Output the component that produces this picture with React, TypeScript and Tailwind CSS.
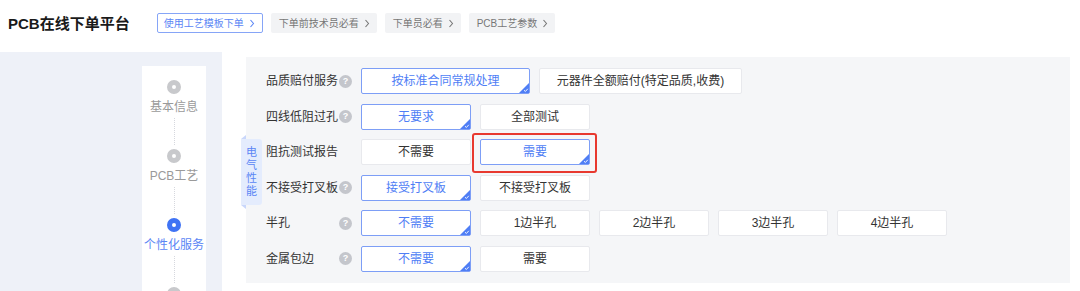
import { ReactNode } from "react";

const font = "font-['Liberation_Sans','Noto_Sans_CJK_SC',sans-serif]";

function Help() {
  return (
    <span className="flex h-[13px] w-[13px] items-center justify-center rounded-full bg-[#c4c6cc] text-[9px] font-bold leading-none text-white">
      ?
    </span>
  );
}

function Chev() {
  return (
    <svg width="6" height="9" viewBox="0 0 6 9" className="shrink-0">
      <path d="M1.5 1 L4.5 4.5 L1.5 8" stroke="currentColor" strokeWidth="1.1" fill="none" />
    </svg>
  );
}

function Opt({ label, on, w = "w-[110px]", hl }: { label: string; on?: boolean; w?: string; hl?: boolean }) {
  return (
    <div className={`relative ${w} h-[26px] shrink-0`}>
      <div
        className={`relative flex h-full w-full items-center justify-center rounded-[2px] bg-white text-[12px] ${
          on ? "border border-[#7d9ef6] text-[#4f7ef5]" : "border border-[#e8e9ed] text-[#333]"
        }`}
      >
        {label}
        {on && (
          <svg className="absolute bottom-0 right-0" width="10" height="10" viewBox="0 0 10 10">
            <path d="M10 0 L10 10 L0 10 Z" fill="#4f7ef5" />
            <path d="M5 7.2 L6.4 8.5 L8.8 5.8" stroke="#fff" strokeWidth="0.9" fill="none" />
          </svg>
        )}
      </div>
      {hl && <div className="absolute -bottom-[8px] -left-[8px] -right-[7px] -top-[6px] rounded-[3px] border-2 border-[#e8392f]" />}
    </div>
  );
}

function Row({ label, help = true, children }: { label: string; help?: boolean; children: ReactNode }) {
  return (
    <div className="flex h-[26px] items-center">
      <div className="flex w-[95px] shrink-0 items-center">
        <span className="w-[73px] text-[12px] text-[#333]">{label}</span>
        {help && <Help />}
      </div>
      <div className="flex gap-[9px]">{children}</div>
    </div>
  );
}

function Step({ label, active, last }: { label: string; active?: boolean; last?: boolean }) {
  return (
    <div className="flex flex-col items-center">
      <div className={`h-[14px] w-[14px] rounded-full border-[5px] bg-white ${active ? "border-[#3f73f4]" : "border-[#c8c9cc]"}`} />
      <div className={`mt-[6px] text-[12px] leading-[14px] ${active ? "text-[#5b86f5]" : "text-[#9a9a9a]"}`}>{label}</div>
      {!last && <div className="mb-[4px] mt-[4px] h-[27px] border-l border-dotted border-[#d6d8de]" />}
    </div>
  );
}

export default function App() {
  return (
    <div className={`h-[291px] w-[1080px] overflow-hidden bg-white ${font}`}>
      <div className="flex h-[52px] items-start">
        <h1 className="ml-[8px] mt-[14px] text-[15px] font-bold leading-[20px] text-[#1a1a1a]">PCB在线下单平台</h1>
        <div className="ml-[27px] mt-[13px] flex gap-[8px] text-[10px]">
          <span className="flex h-[20px] items-center gap-[5px] rounded-[2px] border border-[#86a5f7] bg-white pl-[6px] pr-[7px] text-[#5b86f5]">
            使用工艺模板下单 <Chev />
          </span>
          <span className="flex h-[20px] items-center gap-[5px] rounded-[2px] bg-[#f2f3f5] pl-[8px] pr-[7px] text-[#777]">
            下单前技术员必看 <Chev />
          </span>
          <span className="flex h-[20px] items-center gap-[5px] rounded-[2px] bg-[#f2f3f5] pl-[8px] pr-[7px] text-[#777]">
            下单员必看 <Chev />
          </span>
          <span className="flex h-[20px] items-center gap-[5px] rounded-[2px] bg-[#f2f3f5] pl-[8px] pr-[7px] text-[#777]">
            PCB工艺参数 <Chev />
          </span>
        </div>
      </div>
      <div className="flex h-[239px]">
        <aside className="w-[222px] shrink-0 bg-[#eef1f8] pl-[142px] pt-[14px]">
          <div className="h-full w-[64px] bg-white pt-[14px]">
            <Step label="基本信息" />
            <Step label="PCB工艺" />
            <Step label="个性化服务" active />
            <Step label="" last />
          </div>
        </aside>
        <main className="flex-1 pb-[8px] pl-[24px] pr-[10px] pt-[5px]">
          <div className="relative h-full bg-[#f5f6f8] pl-[20px] pt-[11px]">
            <div className="absolute left-[-5px] top-[78px] w-[21px]">
              <div className="h-0 w-0 border-b-[4px] border-l-[5px] border-b-[#c9d7fb] border-l-transparent" />
              <div className="flex h-[66px] flex-col items-center justify-center rounded-r-[3px] bg-[#e4ecfd] text-[11px] leading-[13px] text-[#5b86f5]">
                <span>电</span>
                <span>气</span>
                <span>性</span>
                <span>能</span>
              </div>
              <div className="h-0 w-0 border-l-[5px] border-t-[4px] border-l-transparent border-t-[#c9d7fb]" />
            </div>
            <div className="flex flex-col gap-[9.6px]">
              <Row label="品质赔付服务">
                <Opt label="按标准合同常规处理" on w="w-[169px]" />
                <Opt label="元器件全额赔付(特定品质,收费)" w="w-[203px]" />
              </Row>
              <Row label="四线低阻过孔">
                <Opt label="无要求" on />
                <Opt label="全部测试" />
              </Row>
              <Row label="阻抗测试报告" help={false}>
                <Opt label="不需要" />
                <Opt label="需要" on hl />
              </Row>
              <Row label="不接受打叉板">
                <Opt label="接受打叉板" on />
                <Opt label="不接受打叉板" />
              </Row>
              <Row label="半孔">
                <Opt label="不需要" on />
                <Opt label="1边半孔" />
                <Opt label="2边半孔" />
                <Opt label="3边半孔" />
                <Opt label="4边半孔" />
              </Row>
              <Row label="金属包边">
                <Opt label="不需要" on />
                <Opt label="需要" />
              </Row>
            </div>
          </div>
        </main>
      </div>
    </div>
  );
}
